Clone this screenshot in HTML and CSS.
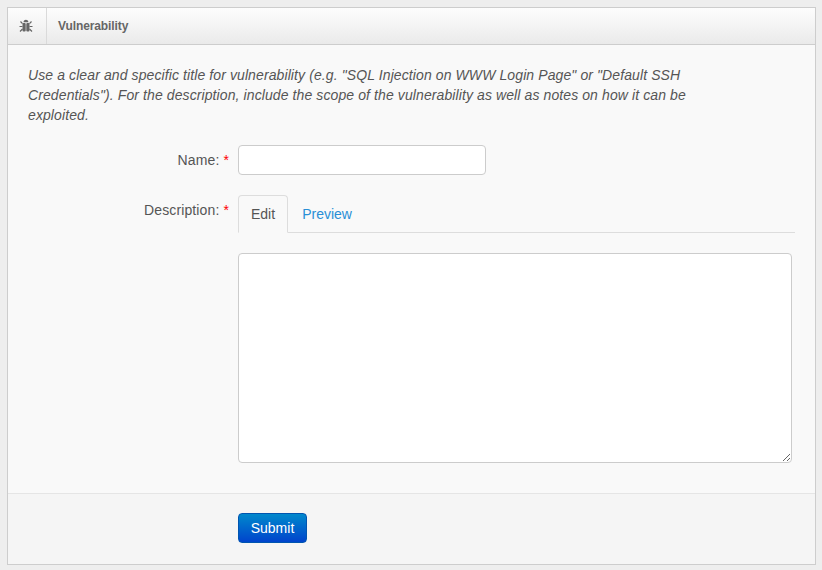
FILE: index.html
```html
<!DOCTYPE html>
<html lang="en">
<head>
<meta charset="UTF-8" />
<title>Vulnerability</title>
<link rel="stylesheet" href="styles.css">
</head>
<body>

<div class="widget">
  <div class="widget-title">
    <span class="icon">
      <svg width="14" height="14" viewBox="0 0 14 14" fill="#666">
        <path d="M4.5 3.2 A2.5 2.5 0 0 1 9.5 3.2 Z" />
        <rect x="3.5" y="3.9" width="3.2" height="8.6" rx="1" />
        <rect x="7.3" y="3.9" width="3.2" height="8.6" rx="1" />
        <path d="M1.5 2.5 L3.5 4.6 M12.5 2.5 L10.5 4.6 M0.5 7.5 H3.5 M13.5 7.5 H10.5 M1 12.5 L3.5 10 M13 12.5 L10.5 10" stroke="#666" stroke-width="1.2" fill="none" />
      </svg>
    </span>
    <h5>Vulnerability</h5>
  </div>

  <form class="widget-content">
    <p class="help">Use a clear and specific title for vulnerability (e.g. "SQL Injection on WWW Login Page" or "Default SSH Credentials"). For the description, include the scope of the vulnerability as well as notes on how it can be exploited.</p>

    <div class="control-group">
      <label class="control-label">Name:<span class="req">*</span></label>
      <div class="controls">
        <input type="text" class="name-input">
      </div>
    </div>

    <div class="control-group control-group-last">
      <label class="control-label">Description:<span class="req">*</span></label>
      <div class="controls">
        <ul class="tabs">
          <li class="tab active">Edit</li>
          <li class="tab"><a href="#preview">Preview</a></li>
        </ul>
        <textarea class="desc-input"></textarea>
      </div>
    </div>

    <div class="form-actions">
      <button type="button" class="btn-submit">Submit</button>
    </div>
  </form>
</div>

</body>
</html>
```

FILE: styles.css
```css
* {
  box-sizing: border-box;
}
body {
  margin: 0;
  padding: 7px 6px 5px 7px;
  background: #eeeeee;
  font-family: "Liberation Sans", sans-serif;
  font-size: 14px;
  line-height: 20px;
  color: #555;
}
.widget {
  border: 1px solid #cdcdcd;
  background: #f9f9f9;
}
.widget-title {
  display: flex;
  align-items: center;
  height: 37px;
  border-bottom: 1px solid #cdcdcd;
  background: linear-gradient(to bottom, #fdfdfd, #eaeaea);
}
.icon {
  display: flex;
  align-items: center;
  justify-content: center;
  width: 39px;
  height: 100%;
  padding-right: 2px;
  border-right: 1px solid #dadada;
}
.widget-title h5 {
  margin: 0 0 0 11px;
  font-size: 12px;
  font-weight: bold;
  letter-spacing: -0.1px;
  color: #666;
}
.help {
  margin: 0;
  padding: 20px 120px 0 20px;
  height: 100px;
  font-style: italic;
  letter-spacing: 0.1px;
}
.control-group {
  display: flex;
  margin-bottom: 20px;
}
.control-group-last {
  margin-bottom: 30px;
}
.control-label {
  width: 221px;
  margin-right: 9px;
  padding-top: 5px;
  text-align: right;
  letter-spacing: 0.12px;
  color: #555;
}
.req {
  color: #f00;
  margin-left: 4px;
}
.controls {
  flex: 1;
  padding-right: 20px;
}
.name-input {
  display: block;
  width: 248px;
  height: 30px;
  border: 1px solid #ccc;
  border-radius: 4px;
  background: #fff;
}
.tabs {
  display: flex;
  list-style: none;
  margin: 0 0 20px;
  padding: 0;
  height: 38px;
  border-bottom: 1px solid #ddd;
}
.tab {
  height: 38px;
  padding: 9px 14px;
}
.tab.active {
  border: 1px solid #ddd;
  border-bottom-color: #f9f9f9;
  border-radius: 4px 4px 0 0;
  padding: 8px 12px;
}
.tab a {
  color: #2a8fd6;
  text-decoration: none;
}
.desc-input {
  display: block;
  width: 554px;
  height: 210px;
  border: 1px solid #ccc;
  border-radius: 4px;
  background: #fff;
}
.form-actions {
  height: 71px;
  padding: 19px 0 0 230px;
  border-top: 1px solid #e5e5e5;
  background: #f5f5f5;
}
.btn-submit {
  display: block;
  width: 69px;
  height: 30px;
  padding: 0;
  border: 1px solid #0055b0;
  border-radius: 4px;
  background: linear-gradient(to bottom, #0088cc, #0044cc);
  color: #fff;
  font-family: inherit;
  font-size: 14px;
}
```
